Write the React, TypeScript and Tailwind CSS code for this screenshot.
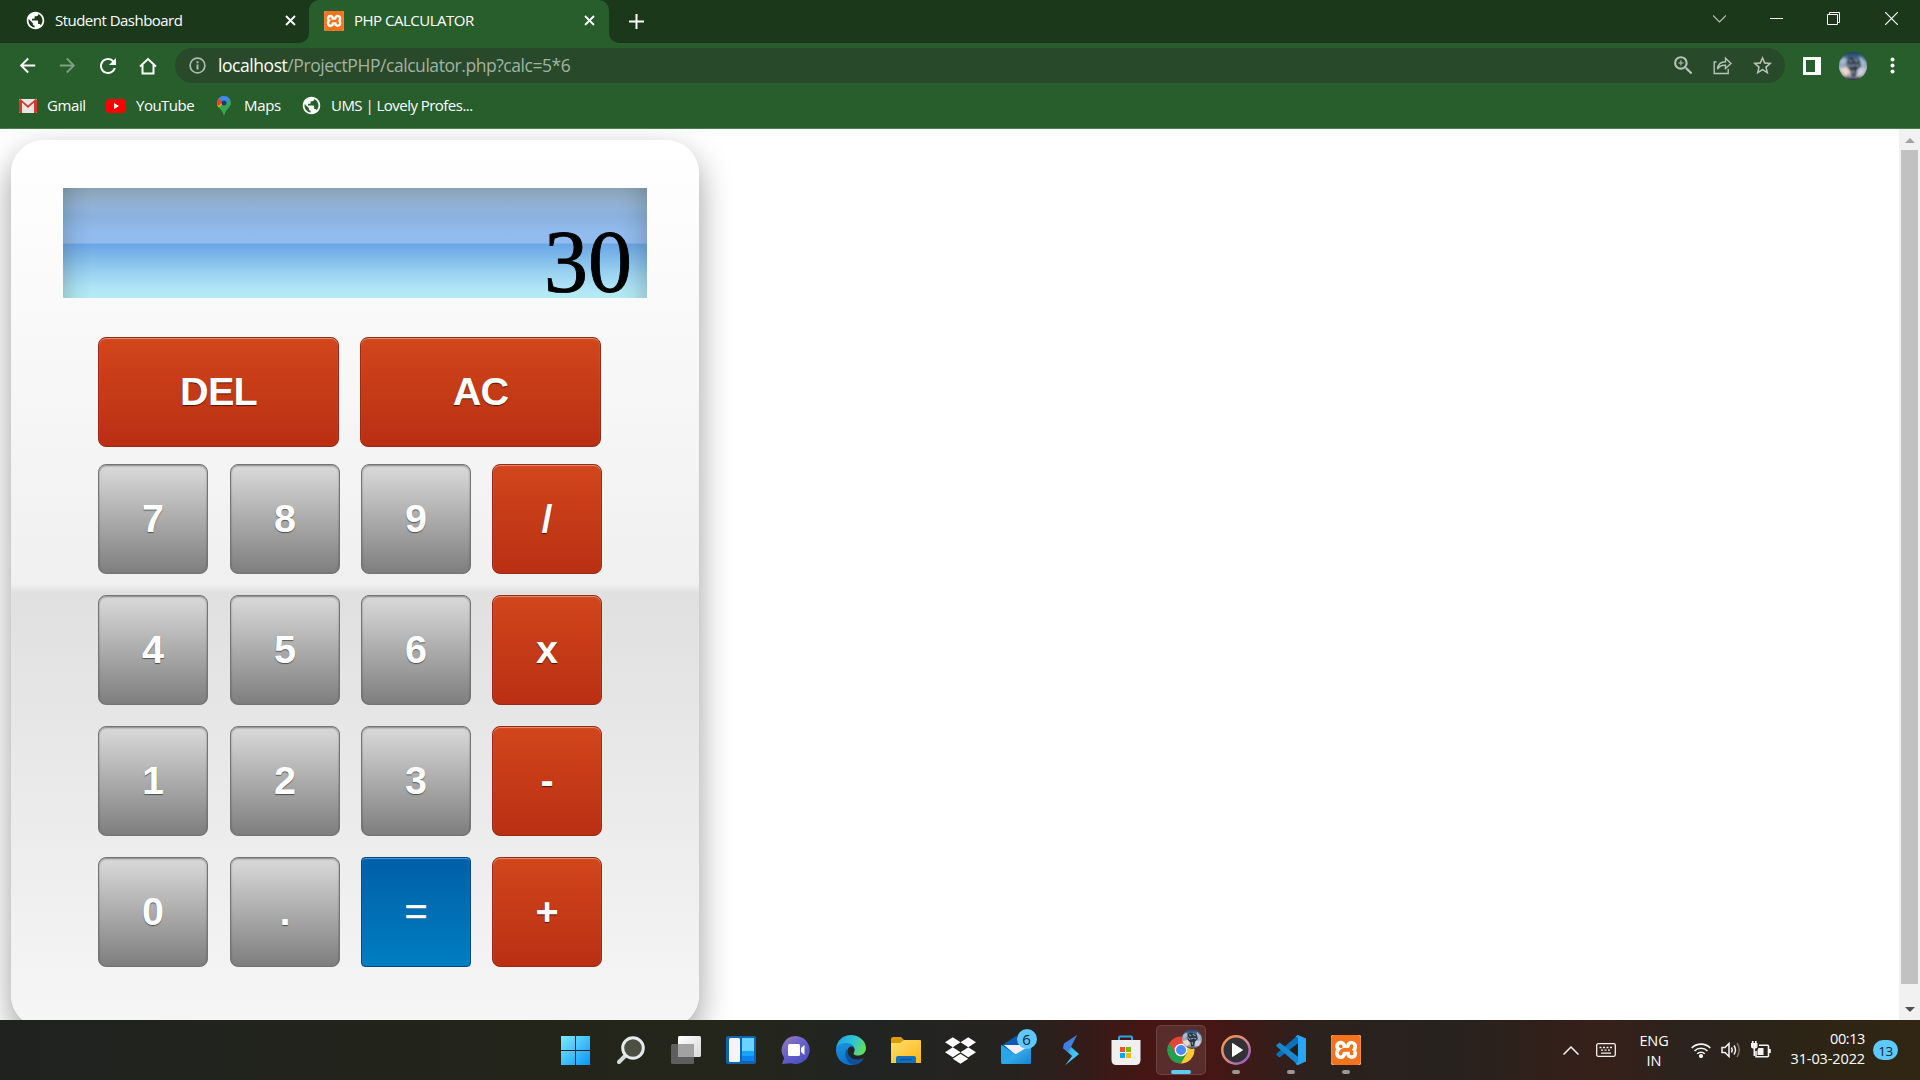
import React from "react";
import { MdPublic, MdArrowBack, MdArrowForward, MdRefresh, MdZoomIn, MdStarBorder } from "react-icons/md";
import { SiXampp } from "react-icons/si";
import { FaDropbox } from "react-icons/fa";

const Cross = ({ className = "" }: { className?: string }) => (
  <svg width="11" height="11" viewBox="0 0 11 11" className={className} stroke="#fff" strokeWidth="1.8">
    <path d="M1 1l9 9M10 1l-9 9" />
  </svg>
);

const Xampp = ({ className = "" }: { className?: string }) => (
  <div className={`flex shrink-0 items-center justify-center overflow-hidden rounded-[2px] bg-white ${className}`}>
    <SiXampp className="h-full w-full text-[#f5731c]" />
  </div>
);

const Avatar = ({ id, size }: { id: string; size: number }) => (
  <svg width={size} height={size} viewBox="0 0 28 28">
    <defs>
      <linearGradient id={id} x1="0" y1="0" x2="0" y2="1">
        <stop offset="0" stopColor="#17406a" />
        <stop offset=".3" stopColor="#5f7f9d" />
        <stop offset=".6" stopColor="#b5b6c4" />
        <stop offset=".85" stopColor="#a99d98" />
        <stop offset="1" stopColor="#1c2c58" />
      </linearGradient>
      <filter id={id + "f"}>
        <feGaussianBlur stdDeviation="1" />
      </filter>
      <clipPath id={id + "c"}>
        <circle cx="14" cy="14" r="14" />
      </clipPath>
    </defs>
    <g clipPath={`url(#${id}c)`}>
      <rect width="28" height="28" fill={`url(#${id})`} />
      <g filter={`url(#${id}f)`}>
        <path d="M0 9l6-4 2 4-5 5zM21 4l6 7-3 5-4-6z" fill="#a9bcd2" />
        <path d="M1 17l7-2 3 6-5 3z" fill="#e8d9cf" />
        <path d="M19 17l7-1-2 7-6 1z" fill="#c9cfe6" />
        <path d="M8 8l3-3 5 1 5 2 1 6-4 4-1 6-4 1-1-6-4-4z" fill="#26343f" />
        <path d="M10 8l3 2M15 7l4 3M12 14l4-1M17 13l3 1M14 18l1 4M9 12l2 3" stroke="#93a3b3" strokeWidth="1.500" />
      </g>
    </g>
  </svg>
);

function TabStrip() {
  return (
    <div className="flex h-[43px] shrink-0 bg-[#1b381b] text-[15px] text-white">
      <div className="flex w-[309px] items-center pb-[2px] pl-[25px]">
        <MdPublic className="size-[21px] shrink-0" />
        <span className="ml-[9px] w-[229px] tracking-[-0.52px]">Student Dashboard</span>
        <Cross className="ml-[0.5px]" />
      </div>
      <div className="relative flex w-[300px] items-center rounded-t-[10px] bg-[#285e2b] pb-[2px] pl-[15px]">
        <svg className="absolute bottom-0 -left-[10px]" width="10" height="10">
          <path d="M10 0v10H0A10 10 0 0 0 10 0z" fill="#285e2b" />
        </svg>
        <svg className="absolute -right-[10px] bottom-0" width="10" height="10">
          <path d="M0 0v10h10A10 10 0 0 1 0 0z" fill="#285e2b" />
        </svg>
        <Xampp className="size-[20px]" />
        <span className="ml-[10px] w-[229px] tracking-[-0.5px]">PHP CALCULATOR</span>
        <Cross className="ml-[0.5px]" />
      </div>
      <svg className="mt-[14px] ml-[20px]" width="15" height="15" stroke="#fff" strokeWidth="2">
        <path d="M7.500 0v15M0 7.500h15" />
      </svg>
      <div className="mt-[12px] mr-[22px] ml-auto flex">
        <svg width="13" height="13" fill="none" stroke="#b5c4b5" strokeWidth="1.200">
          <path d="M0 3.500l6.500 6.500L13 3.500" />
        </svg>
        <svg className="ml-[44px]" width="13" height="13" stroke="#fff" strokeWidth="1">
          <path d="M0 6.500h13" />
        </svg>
        <svg className="ml-[44px]" width="13" height="13" fill="none" stroke="#fff" strokeWidth="1">
          <path d="M.5 2.500h10v10H.5zM2.500 2.500v-2h10v10h-2" />
        </svg>
        <svg className="ml-[45px]" width="13" height="13" stroke="#fff" strokeWidth="1.200">
          <path d="M0 0l13 13M13 0L0 13" />
        </svg>
      </div>
    </div>
  );
}

function Toolbar() {
  return (
    <div className="flex h-[45px] shrink-0 items-center bg-[#285e2b] pl-[16px] text-white">
      <MdArrowBack className="size-[23px]" />
      <MdArrowForward className="ml-[17px] size-[23px] text-[#7f9f80]" />
      <MdRefresh className="ml-[17px] size-[24px]" />
      <svg className="ml-[19px]" width="18" height="18" fill="none" stroke="#fff" strokeWidth="2">
        <path d="M1 9.500L9 2l8 7.500M3.500 8v8.500h11V8" />
      </svg>
      <div className="ml-[18px] flex h-[35px] w-[1610px] items-center rounded-full bg-[#284a2a] pl-[14px] text-[#b9c2b9]">
        <svg width="17" height="17" fill="none" stroke="#b0bab0" strokeWidth="1.700">
          <circle cx="8.500" cy="8.500" r="7.400" />
          <path d="M8.500 7.500v5M8.500 4.300v1.900" strokeWidth="2" />
        </svg>
        <span className="ml-[12px] text-[17.500px] tracking-[-0.44px] text-[#a3b2a4]">
          <span className="text-white">localhost</span>/ProjectPHP/calculator.php?calc=5*6
        </span>
        <MdZoomIn className="ml-auto size-[25px]" />
        <svg className="ml-[17px]" width="20" height="19" fill="none" stroke="#b9c2b9" strokeWidth="1.400">
          <path d="M3.500 6H1.200v11.500h14V13M4.500 13c.5-5 3-7 8-7.200V2.200L18 7.500l-5.500 5V9.300C9 9 6.500 10 4.500 13z" />
        </svg>
        <MdStarBorder className="mr-[11px] ml-[18px] size-[23px]" />
      </div>
      <svg className="ml-[18px]" width="18" height="18">
        <path d="M0 0h18v18H0zM3 3v12h9V3z" fill="#fff" fillRule="evenodd" />
      </svg>
      <div className="ml-[18px]">
        <Avatar id="av1" size={28} />
      </div>
      <svg className="ml-[23px]" width="5" height="17" fill="#fff">
        <circle cx="2.500" cy="2.500" r="2" />
        <circle cx="2.500" cy="8.500" r="2" />
        <circle cx="2.500" cy="14.500" r="2" />
      </svg>
    </div>
  );
}

function Bookmarks() {
  return (
    <div className="flex h-[41px] shrink-0 items-center border-b border-[#4c7d4e] bg-[#285e2b] pb-[5px] pl-[19px] text-[15px] text-white">
      <svg width="18" height="14">
        <rect width="18" height="14" rx="1" fill="#e9e6e6" />
        <path d="M3 3.500v10.500H1.200Q0 14 0 12.800V1.500Q0 0 1.500 0L9 6.500 16.500 0Q18 0 18 1.500v11.300q0 1.200-1.200 1.200H15V3.500L9 9z" fill="#d8372c" />
      </svg>
      <span className="ml-[10px] w-[59px] tracking-[-0.4px]">Gmail</span>
      <svg width="20" height="14">
        <rect width="20" height="14" rx="3.500" fill="#f00" />
        <path d="M8 4l5 3-5 3z" fill="#fff" />
      </svg>
      <span className="ml-[10px] w-[81px] tracking-[-0.5px]">YouTube</span>
      <svg width="14" height="19" viewBox="0 0 14 19">
        <path d="M7 0a7 7 0 0 1 7 7c0 4-5.200 6-6.200 11q-.8 2-1.600 0C5.500 14 0 11 0 7a7 7 0 0 1 7-7z" fill="#34a853" />
        <path d="M1.500 11.500C.5 10 0 8.500 0 7l6-5 5 2z" fill="#fbbc04" />
        <path d="M0 7q0-3 1.800-4.800L6 5 2 10Q0 9 0 7z" fill="#ea4335" />
        <path d="M1.800 2.300A7 7 0 0 1 13 3.400L8.500 8.500 5 5.500z" fill="#4285f4" />
        <circle cx="7" cy="7" r="2.500" fill="#1f3d66" />
      </svg>
      <span className="ml-[13px] w-[57px] tracking-[-0.35px]">Maps</span>
      <MdPublic className="size-[21px]" />
      <span className="ml-[9px] tracking-[-0.53px]">UMS | Lovely Profes...</span>
    </div>
  );
}

type Kind = "gray" | "red" | "blue";

const kinds: Record<Kind, string> = {
  gray: "rounded-[8px] border-[#747474] bg-[linear-gradient(#dadada,#7e7e7e)] font-bold shadow-[inset_0_1px_2px_rgba(0,0,0,0.4)] [text-shadow:0_1px_1px_rgba(0,0,0,0.5)]",
  red: "rounded-[8px] border-[#952b12] bg-[linear-gradient(#d1461b,#ba2f13)] font-bold shadow-[inset_0_1px_1px_rgba(255,255,255,0.4)] [text-shadow:0_1px_1px_rgba(0,0,0,0.6)]",
  blue: "rounded-[4px] border-[#0a4878] bg-[linear-gradient(#005fa7,#007dc1)] font-normal shadow-[inset_0_1px_1px_#4b9cf0] [-webkit-text-stroke:0.5px_white] [text-shadow:0_1px_1px_rgba(0,0,0,0.3)]",
};

function Key({ label, kind, wide }: { label: string; kind: Kind; wide?: boolean }) {
  return (
    <button
      className={`flex h-[110px] items-center justify-center border pb-[3px] font-['Liberation_Sans',Arial,sans-serif] text-[39.600px] leading-[44px] text-white ${wide ? "w-[241px] tracking-[-0.8px]" : "w-[110px]"} ${kinds[kind]}`}
    >
      {label}
    </button>
  );
}

const rows: [string, Kind][][] = [
  [["7", "gray"], ["8", "gray"], ["9", "gray"], ["/", "red"]],
  [["4", "gray"], ["5", "gray"], ["6", "gray"], ["x", "red"]],
  [["1", "gray"], ["2", "gray"], ["3", "gray"], ["-", "red"]],
  [["0", "gray"], [".", "gray"], ["=", "blue"], ["+", "red"]],
];

function Calculator() {
  return (
    <div className="mt-[11px] ml-[11px] h-[888px] w-[688px] shrink-0 rounded-[33px] bg-[linear-gradient(#fff,#f0f0f0_50%,#e0e0e0_51%,#f6f6f6)] px-[52px] pt-[48px] shadow-[0_14px_33px_rgba(0,0,0,0.39)]">
      <div className="flex h-[110px] items-end justify-end bg-[linear-gradient(90deg,rgba(50,60,60,0.19),rgba(50,60,60,0.06)_14px,transparent_28px,transparent_556px,rgba(50,60,60,0.06)_570px,rgba(50,60,60,0.19)),linear-gradient(#86a3b5,#8facc6_9%,#91b2d9_18%,#8ab1dd_25%,#91bbee_40%,#93bcee_50%,#6aa6e6_51%,#7db8ea_62%,#98d0f0_76%,#aee4f5_90%,#b4ecf3)] pr-[15px] font-['Liberation_Serif','Times_New_Roman',serif] text-[88px] leading-[72px] text-black [-webkit-text-stroke:0.9px_black]">
        30
      </div>
      <div className="mt-[39px] ml-[35px] flex gap-[21px]">
        <Key label="DEL" kind="red" wide />
        <Key label="AC" kind="red" wide />
      </div>
      <div className="mt-[17px] ml-[35px] grid grid-cols-[132px_131px_131px_110px] gap-y-[21px]">
        {rows.flat().map(([l, k]) => (
          <Key key={l} label={l} kind={k} />
        ))}
      </div>
    </div>
  );
}

function Scrollbar() {
  return (
    <div className="flex w-[21px] shrink-0 flex-col items-center bg-[#f1f1f1]">
      <svg width="10" height="5" className="mt-[9px] mb-[7px] shrink-0">
        <path d="M0 5L5 0l5 5z" fill="#a3a3a3" />
      </svg>
      <div className="h-[834px] w-[17px] bg-[#c1c1c1]" />
      <svg width="10" height="5" className="mt-[23px]">
        <path d="M0 0l5 5 5-5z" fill="#505050" />
      </svg>
    </div>
  );
}

const Slot = ({ children, open, active }: { children: React.ReactNode; open?: boolean; active?: boolean }) => (
  <div className="flex h-full w-[55px] justify-center pt-[5px]">
    <div className={`relative flex h-[50px] w-[50px] items-center justify-center rounded-[5px] ${active ? "border border-white/10 bg-white/10" : ""}`}>
      {children}
      {open && <span className="absolute bottom-[1px] h-[4px] w-[8px] rounded-full bg-[#9a9894]" />}
      {active && <span className="absolute bottom-0 h-[4px] w-[20px] rounded-full bg-[#5ec8ff]" />}
    </div>
  </div>
);

function Taskbar() {
  return (
    <div className="flex h-[60px] shrink-0 bg-[linear-gradient(90deg,#202220,#23241a_500px,#24251b_760px,#212423_860px,#26231f_1020px,#351b18_1090px,#461614_1150px,#461614_1210px,#2c211d_1310px,#27221e_1450px,#30201a_1540px,#37201a_1600px,#2b231d_1690px,#2c2417_1780px,#312612)] pl-[548px] text-white">
      <Slot>
        <svg width="30" height="30">
          <defs>
            <linearGradient id="win" x1="0" y1="0" x2="1" y2="1" gradientUnits="objectBoundingBox">
              <stop offset="0" stopColor="#7deafe" />
              <stop offset="1" stopColor="#0b95f8" />
            </linearGradient>
          </defs>
          <path d="M0 1h14v14H0zM15 1h14v14H15zM0 16h14v14H0zM15 16h14v14H15z" fill="url(#win)" />
        </svg>
      </Slot>
      <Slot>
        <svg width="28" height="30" viewBox="0 0 28 30">
          <path d="M9 20l-7 7" stroke="#d5dadd" strokeWidth="4" strokeLinecap="round" />
          <circle cx="16" cy="13" r="10.300" fill="#4d4e44" stroke="#e8ebed" strokeWidth="3" />
        </svg>
      </Slot>
      <Slot>
        <svg width="30" height="30">
          <defs>
            <linearGradient id="tv" x1="0" y1="0" x2="1" y2="1">
              <stop offset="0" stopColor="#fff" />
              <stop offset="1" stopColor="#d8d8d8" />
            </linearGradient>
          </defs>
          <rect y="9" width="23" height="20" rx="1.500" fill="#5e5e5e" />
          <rect x="7" y="1" width="23" height="21" rx="1.500" fill="url(#tv)" />
          <path d="M7 9h16v13H8.500Q7 22 7 20.500z" fill="#a2a2a2" />
        </svg>
      </Slot>
      <Slot>
        <svg width="30" height="30">
          <rect y="1" width="30" height="28" rx="2" fill="#1263b0" />
          <rect x="3" y="3" width="11" height="24" rx="1.500" fill="#f4f4f6" />
          <path d="M16 3h12v13H16z" fill="#66d4ff" />
          <path d="M16 16h12v5H16z" fill="#18a4fa" />
          <path d="M16 21h12v5H16z" fill="#0a83ee" />
        </svg>
      </Slot>
      <Slot>
        <svg width="30" height="30">
          <defs>
            <linearGradient id="chat" x1="0" y1="0" x2=".7" y2="1">
              <stop offset="0" stopColor="#9a78bd" />
              <stop offset=".5" stopColor="#6a62ca" />
              <stop offset="1" stopColor="#4b4fc4" />
            </linearGradient>
          </defs>
          <path d="M15 1a14 14 0 1 1-5 27.200L1 29l2.200-6A14 14 0 0 1 15 1z" fill="url(#chat)" />
          <rect x="7" y="9" width="12" height="12" rx="1.500" fill="#fff" />
          <path d="M20 13l3.500-3v10L20 17z" fill="#fff" />
        </svg>
      </Slot>
      <Slot>
        <svg width="30" height="30">
          <defs>
            <linearGradient id="eg" x1="0" y1=".3" x2="1" y2=".6">
              <stop offset="0" stopColor="#1fa2e2" />
              <stop offset=".55" stopColor="#30c6d3" />
              <stop offset="1" stopColor="#65e052" />
            </linearGradient>
            <linearGradient id="eb" x1="0" y1="0" x2=".4" y2="1">
              <stop offset="0" stopColor="#1c94dd" />
              <stop offset="1" stopColor="#0574cc" />
            </linearGradient>
          </defs>
          <path d="M0 14C1 5 7 0 15 0s15 6 15 13c0 5-4 7.500-8 7.500-4 0-5-1.500-4-3 1.800-3 0-7.500-5-7.500C7 8 2 10 0 14z" fill="url(#eg)" />
          <path d="M0 14C2 9.500 6 8 9.500 8c4 0 7.500 1.500 8.500 4-5-2-7 2-6.500 6 .5 6 6 9 10 8.500L17 30C7 31-.5 24 0 14z" fill="url(#eb)" />
          <path d="M11 14c-4 6 0 14 6 16 5 0 9-3 11-7-3 1.500-9 2.500-13-.5-3-2.500-3.500-5-4-8.500z" fill="#11509b" />
        </svg>
      </Slot>
      <Slot>
        <svg width="30" height="30">
          <defs>
            <linearGradient id="fo" x1="0" y1="0" x2="1" y2="1">
              <stop offset="0" stopColor="#ffdd72" />
              <stop offset="1" stopColor="#fcb813" />
            </linearGradient>
          </defs>
          <path d="M0 4q0-2 2-2h8l3 3v6H0z" fill="#dd9a07" />
          <path d="M0 8h9l4-3h16q1 0 1 1v22H0z" fill="url(#fo)" />
          <path d="M5 28v-5q0-2 2-2h16q2 0 2 2v5z" fill="#1170c0" />
          <path d="M9 24.500h12" stroke="#0b5598" strokeWidth="1.500" />
        </svg>
      </Slot>
      <Slot>
        <FaDropbox className="size-[31px]" />
      </Slot>
      <Slot>
        <svg width="30" height="30" className="ml-[1px]">
          <defs>
            <linearGradient id="ml" x1="0" y1="0" x2="1" y2="1">
              <stop offset="0" stopColor="#54cbf6" />
              <stop offset="1" stopColor="#1285d8" />
            </linearGradient>
          </defs>
          <path d="M0 11L15 1l15 10v8H0z" fill="#0b5cb0" />
          <path d="M3 10h24v8L15 20z" fill="#f1f1f1" />
          <path d="M0 10l16 10L30 10v17q0 2-2 2H2q-2 0-2-2z" fill="#2aa5e8" />
          <path d="M0 28L30 10v17q0 2-2 2H2z" fill="url(#ml)" />
        </svg>
        <span className="absolute top-[4px] left-[26px] flex size-[20px] items-center justify-center rounded-full bg-[#5ec8ff] text-[15px] text-[#10232f]">6</span>
      </Slot>
      <Slot>
        <svg width="18" height="31" viewBox="0 0 18 31">
          <defs>
            <linearGradient id="bo" x1="0" y1="0" x2="1" y2="1">
              <stop offset="0" stopColor="#2865c8" />
              <stop offset=".5" stopColor="#35b6f0" />
              <stop offset="1" stopColor="#5fe0ea" />
            </linearGradient>
          </defs>
          <path d="M15 0L1 13l9 8-7 9.500L17 19 8 11z" fill="url(#bo)" />
          <path d="M15 0L2 8.500 1 13l5 4 3-5z" fill="#3f7fe0" />
        </svg>
      </Slot>
      <Slot>
        <svg width="30" height="30">
          <path d="M8 6V2.500Q8 1.500 9 1.500h11q1 0 1 1V6" fill="none" stroke="#27a4ea" strokeWidth="2" />
          <path d="M.5 5h29v20q0 5-5 5h-19q-5 0-5-5z" fill="#f0f0f0" />
          <path d="M9 12h5v5H9z" fill="#f05123" />
          <path d="M15 12h5v5h-5z" fill="#7fbb04" />
          <path d="M9 18h5v5H9z" fill="#05a5f0" />
          <path d="M15 18h5v5h-5z" fill="#fdb90b" />
        </svg>
      </Slot>
      <Slot active>
        <svg width="28" height="28" viewBox="0 0 28 28">
          <circle cx="14" cy="14" r="13.500" fill="#e2453a" />
          <path d="M2.300 7.200A13.500 13.500 0 0 0 14 27.500l5.800-10.200L8.200 17.300z" fill="#23a04c" />
          <path d="M14 27.500A13.500 13.500 0 0 0 25.700 7.500H14l5.800 9.800z" fill="#fccb30" />
          <circle cx="14" cy="14" r="6.300" fill="#fff" />
          <circle cx="14" cy="14" r="5" fill="#4c8bf5" />
        </svg>
        <span className="absolute top-[3px] left-[25px]">
          <Avatar id="av2" size={20} />
        </span>
      </Slot>
      <Slot open>
        <svg width="30" height="30">
          <defs>
            <linearGradient id="mp" x1="0" y1="0" x2="1" y2="1">
              <stop offset="0" stopColor="#f7953f" />
              <stop offset=".5" stopColor="#d78a8a" />
              <stop offset="1" stopColor="#8a55d0" />
            </linearGradient>
          </defs>
          <circle cx="15" cy="15" r="13.700" fill="#323236" stroke="url(#mp)" strokeWidth="2.500" />
          <path d="M11.500 8.500L21.500 15l-10 6.500z" fill="#fff" stroke="#fff" strokeLinejoin="round" />
        </svg>
      </Slot>
      <Slot open>
        <svg width="30" height="30">
          <path d="M22 0v8.500L3.500 22.500 1 20.500q-1.500-1 0-2.300z" fill="#0b71b8" />
          <path d="M22 30v-8.500L3.500 7.500 1 9.500q-1.500 1 0 2.300z" fill="#1788cf" />
          <path d="M22 0l8 3.500v23L22 30q-1.500 0-2.500-1.500l2.500-1V2.500l-2.500-1Q21 0 22 0z" fill="#2aa5f3" />
          <path d="M22 8.500v13L13.500 15z" fill="#241f1c" />
        </svg>
      </Slot>
      <Slot open>
        <Xampp className="size-[30px]" />
      </Slot>

      <div className="mt-[20px] ml-auto flex h-[20px] items-center">
        <svg width="16" height="9" fill="none" stroke="#f3f3f3" strokeWidth="1.500">
          <path d="M.5 8.500L8 1l7.500 7.500" />
        </svg>
        <svg className="ml-[17px]" width="20" height="14" fill="none" stroke="#f3f3f3" strokeWidth="1.300">
          <rect x=".7" y=".7" width="18.600" height="12.600" rx="1.500" />
          <path d="M3.500 4.500h2M7 4.500h2M10.500 4.500h2M14 4.500h2M5 7.200h2M8.500 7.200h2M12 7.200h2M5 10.200h10" />
        </svg>
      </div>
      <div className="ml-[18px] flex h-[60px] w-[40px] flex-col items-center pt-[11px] text-[14.500px] leading-[20px]">
        <span className="tracking-[-0.1px]">ENG</span>
        <span>IN</span>
      </div>
      <div className="mt-[20px] ml-[17px] flex h-[20px] items-center gap-[10px]">
        <svg width="20" height="16" fill="none" stroke="#f3f3f3" strokeWidth="1.600">
          <path d="M.7 6a13 13 0 0 1 18.600 0M3.500 9a9.200 9.200 0 0 1 13 0M6.200 11.800a5.400 5.400 0 0 1 7.600 0" />
          <circle cx="10" cy="14" r="1.300" fill="#f3f3f3" />
        </svg>
        <svg width="20" height="16" fill="none" stroke="#f3f3f3" strokeWidth="1.500">
          <path d="M1 5.500h3L8 1.500v13l-4-4H1z" />
          <path d="M10.500 5.500q1.500 2.500 0 5M13 3.500q3 4.500 0 9" />
          <path d="M16 1q4.500 7 0 14" stroke="#77736d" />
        </svg>
        <svg width="20" height="18" viewBox="0 0 20 18" fill="none" stroke="#f3f3f3" strokeWidth="1.600">
          <path d="M8 4.200h8.500q1 0 1 1v9.600q0 1-1 1H5V10" />
          <path d="M18.800 8v4" strokeWidth="2" />
          <path d="M7.500 7h5v7h-6v-5z" fill="#f3f3f3" stroke="none" />
          <path d="M0 2h6.500v3.500q0 2-3.200 2-3.300 0-3.300-2z" fill="#f3f3f3" stroke="none" />
          <path d="M1.700 0v3M4.800 0v3M3.300 7v8" />
        </svg>
      </div>
      <div className="ml-[12px] flex h-[60px] w-[82px] flex-col items-end pt-[9px] text-[14.500px] leading-[20px] whitespace-nowrap">
        <span className="tracking-[-0.4px]">00:13</span>
        <span className="tracking-[-0.12px]">31-03-2022</span>
      </div>
      <span className="mt-[20px] mr-[22px] ml-[8px] flex h-[20px] w-[25px] shrink-0 items-center justify-center rounded-full bg-[#5ec8ff] pt-[2px] text-[13.500px] tracking-[-0.5px] text-[#10232f]">13</span>
    </div>
  );
}

export default function App() {
  return (
    <div className="flex h-[1080px] w-[1920px] flex-col overflow-hidden bg-white font-['Open_Sans','Noto_Sans',sans-serif]">
      <TabStrip />
      <Toolbar />
      <Bookmarks />
      <div className="flex h-[891px] shrink-0 justify-between overflow-hidden">
        <Calculator />
        <Scrollbar />
      </div>
      <Taskbar />
    </div>
  );
}
